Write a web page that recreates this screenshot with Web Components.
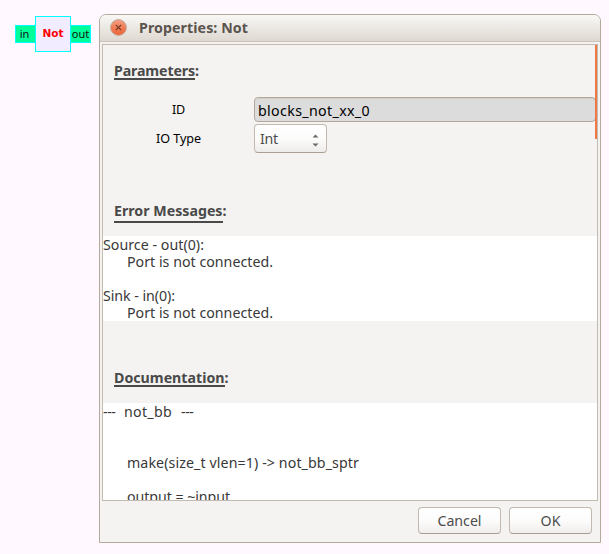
<!DOCTYPE html>
<html lang="en">
<head>
<meta charset="utf-8">
<title>Properties: Not</title>
<style>
html,body{margin:0;height:100%;background:#fff9ff;overflow:hidden}
body{display:flex;align-items:flex-start;font-family:"Noto Sans","Open Sans",sans-serif;font-size:14.2px;line-height:17px;color:#383838}
flow-block{margin:16px 0 0 15px}
props-dialog{margin:14px 0 0 8px}
.b{font-weight:700}
</style>
</head>
<body>
<flow-block></flow-block>
<props-dialog>
  <fit-text slot="title" w="109" class="b">Properties: Not</fit-text>
  <section-head style="--top:17px;--h:16px"><fit-text w="81">Parameters</fit-text></section-head>
  <param-row style="--top:17px"><fit-text slot="label" w="13">ID</fit-text><text-entry slot="field"><fit-text w="112">blocks_not_xx_0</fit-text></text-entry></param-row>
  <param-row style="--top:2px"><fit-text slot="label" w="45">IO Type</fit-text><combo-box slot="field"><fit-text w="18">Int</fit-text></combo-box></param-row>
  <section-head style="--top:49px;--h:19px"><fit-text w="108.5">Error Messages</fit-text></section-head>
  <text-pane style="--top:13px">
    <fit-text w="101">Source - out(0):</fit-text>
    <fit-text w="146" style="margin-left:24px">Port is not connected.</fit-text>
    <fit-text w="72" style="margin-top:17px">Sink - in(0):</fit-text>
    <fit-text w="146" style="margin-left:24px">Port is not connected.</fit-text>
  </text-pane>
  <section-head style="--top:48px;--h:16px"><fit-text w="110.5">Documentation</fit-text></section-head>
  <text-pane style="--top:16px">
    <div style="display:flex"><fit-text w="12.5">---</fit-text><fit-text w="48" style="margin-left:8.5px">not_bb</fit-text><fit-text w="12.5" style="margin-left:9px">---</fit-text></div>
    <fit-text w="232" style="margin:34px 0 0 24px">make(size_t vlen=1) -&gt; not_bb_sptr</fit-text>
    <fit-text w="103" style="margin:17px 0 0 24px">output = ~input</fit-text>
  </text-pane>
  <push-button slot="actions"><fit-text w="44">Cancel</fit-text></push-button>
  <push-button slot="actions"><fit-text w="20">OK</fit-text></push-button>
</props-dialog>
<script>
const define=(name,html,ready)=>customElements.define(name,class extends HTMLElement{
  constructor(){super();this.attachShadow({mode:'open'}).innerHTML=html}
  connectedCallback(){if(ready)ready(this)}
});

define('flow-block',`<style>
:host{display:flex;align-items:center;font:11px/16px "DejaVu Sans",sans-serif;color:#111}
.port{box-sizing:border-box;width:21px;height:18px;border:1px solid #00ffff;background:#00ff9a;display:flex;justify-content:center;font:11px/15px "Noto Sans",sans-serif}
.port:first-of-type{padding-right:2px}
.core{box-sizing:border-box;width:36px;height:36px;margin:0 -1px;border:1px solid #00ffff;background:#f1ecff;color:#f00;font-weight:700;font-size:10.5px;display:flex;align-items:center;justify-content:center;z-index:1;padding-bottom:2px}
</style><div class="port">in</div><div class="core">Not</div><div class="port">out</div>`);

define('props-dialog',`<style>
:host{display:flex;flex-direction:column;box-sizing:border-box;width:502px;height:529px;border:1px solid #b5a99c;border-radius:7px 7px 0 0;background:#f4f3f1;overflow:hidden}
header{display:flex;align-items:center;box-sizing:border-box;height:27px;border-bottom:1px solid #cdc2b8;background:linear-gradient(#f9f8f6,#efede9 35%,#ded8d0);padding:0 0 1px 10px;gap:12px;color:#5b544e}
svg{display:block}
.frame{position:relative;box-sizing:border-box;width:496px;height:457px;margin:2px 0 0 2px;border:1px solid #c4bbb0;overflow:hidden;display:flex;flex-direction:column}
.bar{position:absolute;right:-1px;top:-1px;width:3px;height:95px;background:#f07746}
footer{display:flex;justify-content:flex-end;gap:8px;padding:6px 8px 0 0}
</style>
<header><svg width="17" height="17" viewBox="0 0 17 17"><defs><linearGradient id="g" x2="0" y2="1"><stop stop-color="#f5a184"/><stop offset=".5" stop-color="#f17d56"/><stop offset="1" stop-color="#ed6334"/></linearGradient></defs><circle cx="8.5" cy="8.5" r="7.9" fill="url(#g)" stroke="#c1a99a"/><path d="M5.8 5.8 11.2 11.2M11.2 5.8 5.8 11.2" stroke="#713b27" stroke-width="1.2"/></svg><slot name="title"></slot></header>
<div class="frame"><slot></slot><div class="bar"></div></div>
<footer><slot name="actions"></slot></footer>`);

define('section-head',`<style>
:host{display:flex;flex:none;align-items:flex-start;height:calc(var(--h) + 2px);margin:var(--top) 0 0 11px;font-weight:700;color:#494949}
.u{border-bottom:2px solid #494949;height:var(--h)}
</style><div class="u"><slot></slot></div><span>:</span>`);

define('param-row',`<style>
:host{display:flex;flex:none;align-items:center;margin-top:var(--top);color:#000}
.l{width:151px;display:flex;justify-content:center;font-size:12.6px}
</style><div class="l"><slot name="label"></slot></div><slot name="field"></slot>`);

define('text-entry',`<style>
:host{display:block;box-sizing:border-box;width:342px;height:25px;border:1px solid #b5a89b;border-radius:4px;background:#dcdcdc;padding:4px 0 0 3px;box-shadow:inset 0 1px #d2cfcb}
</style><slot></slot>`);

define('combo-box',`<style>
:host{display:flex;justify-content:space-between;align-items:center;box-sizing:border-box;width:73px;height:29px;border:1px solid #c2b8ae;border-bottom-color:#aa9e93;border-radius:4px;background:linear-gradient(#fff,#fcfcfb 50%,#eeecea);padding:0 7px 0 5px;color:#4c4c4c}
svg{display:block;margin-top:3px}
</style><slot></slot><svg width="7" height="13" viewBox="0 0 7 13"><path d="M.5 3.5 3.5.5 6.5 3.5ZM.5 9.5 3.5 12.5 6.5 9.5Z" fill="#686868"/></svg>`);

define('text-pane',`<style>
:host{display:block;flex:none;margin-top:var(--top);background:#fff}
</style><slot></slot>`);

define('push-button',`<style>
:host{display:flex;align-items:center;justify-content:center;box-sizing:border-box;width:83px;height:27px;border:1px solid #c2b8ae;border-bottom-color:#aa9e93;border-radius:4px;background:linear-gradient(#fff,#fdfcfc 50%,#f0eeec);color:#4c4c4c}
</style><slot></slot>`);

// Text tracked to fill the width given in "w"; defined last, once its containers' fonts apply.
define('fit-text',`<style>:host{display:block;width:max-content;white-space:pre}span{display:block;width:max-content}</style><span><slot></slot></span>`,el=>{
  const s=el.shadowRoot.querySelector('span');
  const w=+el.getAttribute('w');
  const n=el.textContent.length;
  s.style.letterSpacing=(w-s.getBoundingClientRect().width)/n+'px';
});
</script>
</body>
</html>
